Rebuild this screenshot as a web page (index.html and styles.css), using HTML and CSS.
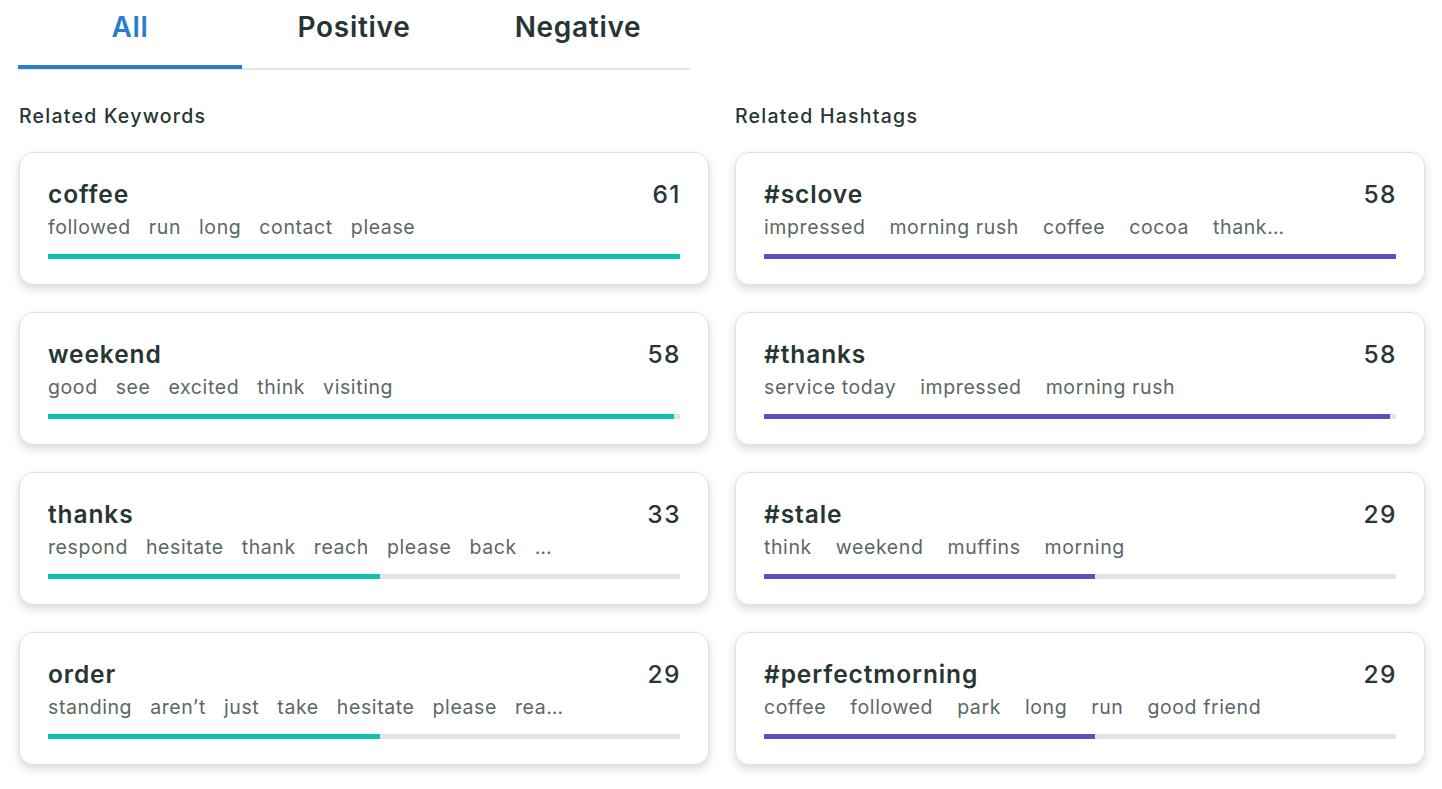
FILE: index.html
```html
<!DOCTYPE html>
<html lang="en">
<head>
<meta charset="utf-8">
<title>Related Keywords</title>
<link rel="stylesheet" href="styles.css">
</head>
<body>
<div class="page">
  <nav class="tabs">
    <div class="tab active">All</div>
    <div class="tab">Positive</div>
    <div class="tab">Negative</div>
  </nav>
  <div class="columns">
    <section class="col">
      <h2 class="col-title">Related Keywords</h2>
      <div class="card">
        <div class="card-head"><span class="name">coffee</span><span class="count">61</span></div>
        <div class="tags"><span>followed</span><span>run</span><span>long</span><span>contact</span><span>please</span></div>
        <div class="track"><div class="fill teal" style="width:100%"></div></div>
      </div>
      <div class="card">
        <div class="card-head"><span class="name">weekend</span><span class="count">58</span></div>
        <div class="tags"><span>good</span><span>see</span><span>excited</span><span>think</span><span>visiting</span></div>
        <div class="track"><div class="fill teal" style="width:99%"></div></div>
      </div>
      <div class="card">
        <div class="card-head"><span class="name">thanks</span><span class="count">33</span></div>
        <div class="tags"><span>respond</span><span>hesitate</span><span>thank</span><span>reach</span><span>please</span><span>back</span><span>…</span></div>
        <div class="track"><div class="fill teal" style="width:52.5%"></div></div>
      </div>
      <div class="card">
        <div class="card-head"><span class="name">order</span><span class="count">29</span></div>
        <div class="tags"><span>standing</span><span>aren’t</span><span>just</span><span>take</span><span>hesitate</span><span>please</span><span>rea…</span></div>
        <div class="track"><div class="fill teal" style="width:52.5%"></div></div>
      </div>
    </section>
    <section class="col">
      <h2 class="col-title">Related Hashtags</h2>
      <div class="card">
        <div class="card-head"><span class="name">#sclove</span><span class="count">58</span></div>
        <div class="tags wide"><span>impressed</span><span>morning rush</span><span>coffee</span><span>cocoa</span><span>thank…</span></div>
        <div class="track"><div class="fill purple" style="width:100%"></div></div>
      </div>
      <div class="card">
        <div class="card-head"><span class="name">#thanks</span><span class="count">58</span></div>
        <div class="tags wide"><span>service today</span><span>impressed</span><span>morning rush</span></div>
        <div class="track"><div class="fill purple" style="width:99%"></div></div>
      </div>
      <div class="card">
        <div class="card-head"><span class="name">#stale</span><span class="count">29</span></div>
        <div class="tags wide"><span>think</span><span>weekend</span><span>muffins</span><span>morning</span></div>
        <div class="track"><div class="fill purple" style="width:52.4%"></div></div>
      </div>
      <div class="card">
        <div class="card-head"><span class="name">#perfectmorning</span><span class="count">29</span></div>
        <div class="tags wide"><span>coffee</span><span>followed</span><span>park</span><span>long</span><span>run</span><span>good friend</span></div>
        <div class="track"><div class="fill purple" style="width:52.4%"></div></div>
      </div>
    </section>
  </div>
</div>
</body>
</html>
```
FILE: styles.css
```css
* { box-sizing: border-box; }
html, body { margin: 0; padding: 0; background: #ffffff; }
body {
  font-family: Inter, "Noto Sans", "Liberation Sans", sans-serif;
  color: #273535;
}
.page { padding: 0 0 0 18px; }

.tabs {
  display: flex;
  width: 672px;
  border-bottom: 2px solid #e3e6e6;
  height: 70px;
}
.tab {
  width: 224px;
  text-align: center;
  font-size: 28px;
  font-weight: 600;
  letter-spacing: 0.7px;
  line-height: 54px;
  color: #273535;
  margin-bottom: -2px;
  border-bottom: 4px solid transparent;
  height: 70px;
}
.tab.active {
  color: #2a7ccd;
  border-bottom-color: #2a7ccd;
  height: 69px;
  margin-bottom: -1px;
}

.columns {
  display: flex;
  gap: 26px;
  padding-left: 1px;
}
.col { width: 690px; }
.col-title {
  margin: 34px 0 24px 0;
  font-size: 19.5px;
  font-weight: 500;
  letter-spacing: 1.25px;
  line-height: 24px;
  color: #273535;
}

.card {
  height: 133px;
  margin-bottom: 27px;
  border: 1px solid #dfe2e2;
  border-radius: 14px;
  background: #fff;
  box-shadow: 0 4px 10px rgba(0, 0, 0, 0.15);
  padding: 26px 28px 0 28px;
}
.card-head {
  display: flex;
  justify-content: space-between;
  align-items: baseline;
  font-size: 24.5px;
  font-weight: 600;
  letter-spacing: 0.9px;
  line-height: 30px;
  color: #273535;
}
.count { font-weight: 500; letter-spacing: 1.5px; margin-right: -1px; }
.tags {
  display: flex;
  gap: 18px;
  margin-top: 5px;
  font-size: 19.5px;
  letter-spacing: 0.6px;
  line-height: 26px;
  color: #5b6767;
  white-space: nowrap;
}
.tags.wide { gap: 24px; }
.track {
  margin-top: 14px;
  height: 5px;
  background: #e2e5e5;
}
.fill { height: 100%; }
.fill.teal { background: #0fc2b0; }
.fill.purple { background: #5e4ec0; }
```
